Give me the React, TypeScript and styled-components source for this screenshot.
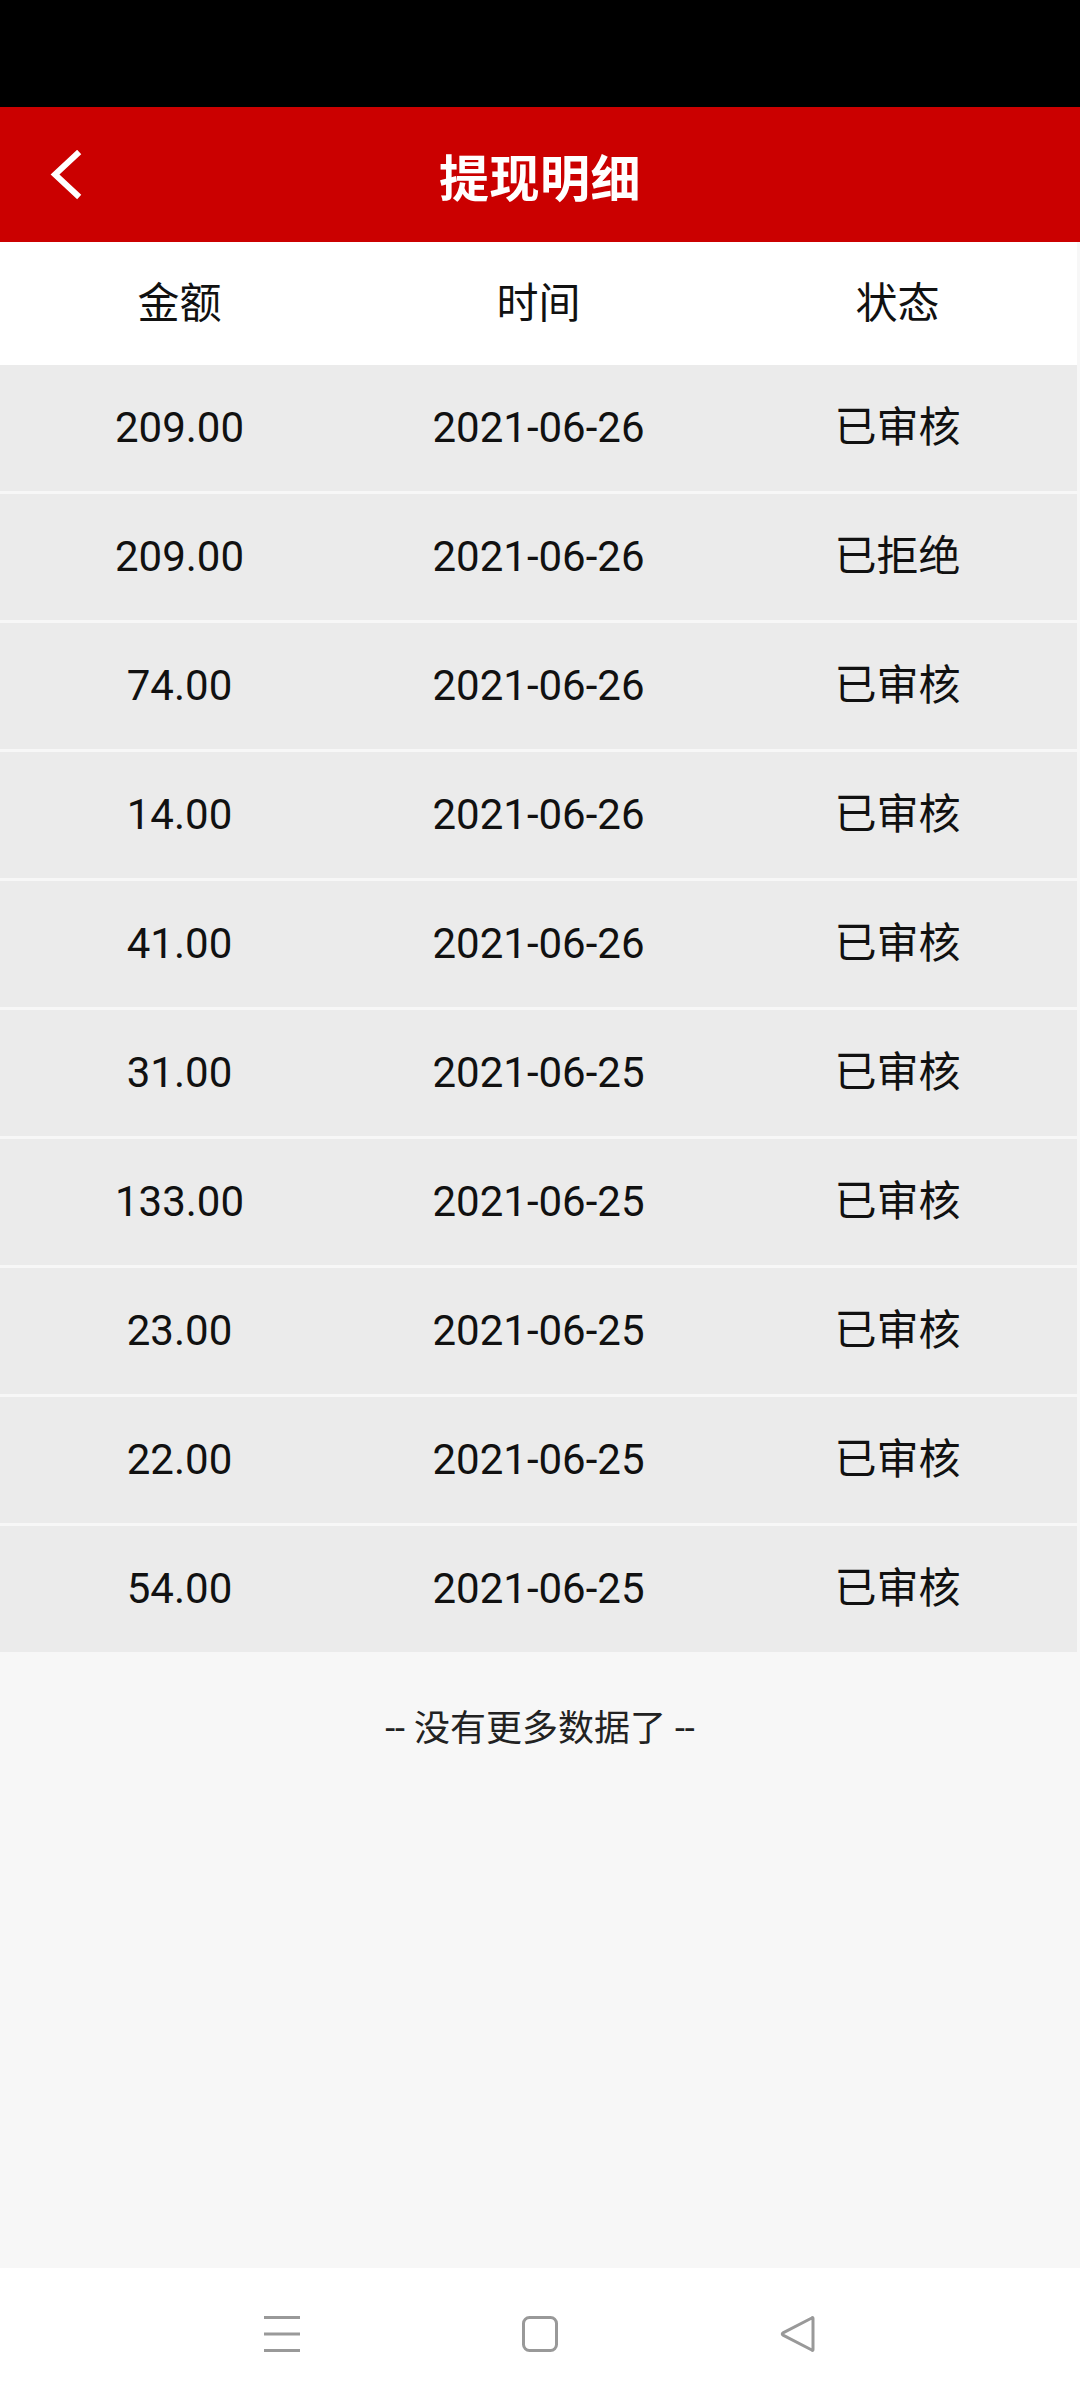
import { createGlobalStyle, styled } from 'styled-components';

const GlobalStyle = createGlobalStyle`
  html, body {
    margin: 0;
    padding: 0;
    background: #f7f7f7;
  }
  body {
    font-family: Roboto, "Noto Sans CJK SC", "Noto Sans", sans-serif;
    color: #111;
  }
`;

const Page = styled.div`
  display: flex;
  flex-direction: column;
  min-height: 2400px;
  background: #f7f7f7;
`;

const StatusBar = styled.div`
  height: 107px;
  background: #000;
`;

const TopBar = styled.header`
  display: grid;
  grid-template-columns: 1fr auto 1fr;
  align-items: center;
  height: 135px;
  background: #cb0000;
  color: #fff;
`;

const BackButton = styled.button`
  justify-self: start;
  display: flex;
  align-items: center;
  margin-left: 50px;
  padding: 0;
  border: none;
  background: transparent;
  cursor: pointer;
`;

const Title = styled.h1`
  margin: 0;
  font-size: 50px;
  font-weight: 700;
  letter-spacing: 0.5px;
`;

const Table = styled.div`
  display: flex;
  flex-direction: column;
  gap: 3px;
  width: calc(100% - 3px);
`;

const Row = styled.div<{ $head?: boolean }>`
  display: grid;
  grid-template-columns: repeat(3, 1fr);
  align-items: center;
  height: ${({ $head }) => ($head ? '123px' : '126px')};
  margin-bottom: ${({ $head }) => ($head ? '-3px' : '0')};
  background: ${({ $head }) => ($head ? '#fff' : '#ebebeb')};
`;

const Cell = styled.div`
  text-align: center;
  font-size: 42px;
  line-height: 1;
  color: #111;
`;

const EndNote = styled.p`
  margin: 0;
  padding-top: 55px;
  text-align: center;
  font-size: 36px;
  line-height: 44px;
  color: #222;
`;

const Filler = styled.div`
  flex: 1;
`;

const NavBar = styled.nav`
  display: flex;
  justify-content: center;
  align-items: center;
  gap: 222px;
  height: 132px;
  background: #fff;
`;

const NavIcon = styled.svg`
  width: 36px;
  height: 36px;
  fill: none;
  stroke: #999;
  stroke-width: 3;
`;

const records = [
  { amount: '209.00', date: '2021-06-26', status: '已审核' },
  { amount: '209.00', date: '2021-06-26', status: '已拒绝' },
  { amount: '74.00', date: '2021-06-26', status: '已审核' },
  { amount: '14.00', date: '2021-06-26', status: '已审核' },
  { amount: '41.00', date: '2021-06-26', status: '已审核' },
  { amount: '31.00', date: '2021-06-25', status: '已审核' },
  { amount: '133.00', date: '2021-06-25', status: '已审核' },
  { amount: '23.00', date: '2021-06-25', status: '已审核' },
  { amount: '22.00', date: '2021-06-25', status: '已审核' },
  { amount: '54.00', date: '2021-06-25', status: '已审核' },
];

const App = () => {
  return (
    <>
      <GlobalStyle />
      <Page>
        <StatusBar />
        <TopBar>
          <BackButton aria-label="返回">
            <svg width="32" height="50" viewBox="0 0 32 50">
              <polyline
                points="27,4 5,24.5 27,45"
                fill="none"
                stroke="#fff"
                strokeWidth="6"
                strokeLinecap="square"
              />
            </svg>
          </BackButton>
          <Title>提现明细</Title>
          <span />
        </TopBar>

        <Table>
          <Row $head>
            <Cell>金额</Cell>
            <Cell>时间</Cell>
            <Cell>状态</Cell>
          </Row>
          {records.map((r, i) => (
            <Row key={i}>
              <Cell>{r.amount}</Cell>
              <Cell>{r.date}</Cell>
              <Cell>{r.status}</Cell>
            </Row>
          ))}
        </Table>

        <EndNote>-- 没有更多数据了 --</EndNote>
        <Filler />

        <NavBar>
          <NavIcon viewBox="0 0 36 36">
            <line x1="0" y1="1.5" x2="36" y2="1.5" />
            <line x1="0" y1="18" x2="36" y2="18" />
            <line x1="0" y1="34.5" x2="36" y2="34.5" />
          </NavIcon>
          <NavIcon viewBox="0 0 36 36">
            <rect x="1.5" y="1.5" width="33" height="33" rx="6" />
          </NavIcon>
          <NavIcon viewBox="0 0 36 36" strokeLinejoin="round">
            <path d="M33 2.5 L33 33.5 Q33 35 31.8 34 L3 19.2 Q1.5 18 3 16.8 L31.8 2 Q33 1 33 2.5 Z" />
          </NavIcon>
        </NavBar>
      </Page>
    </>
  );
};

export default App;
